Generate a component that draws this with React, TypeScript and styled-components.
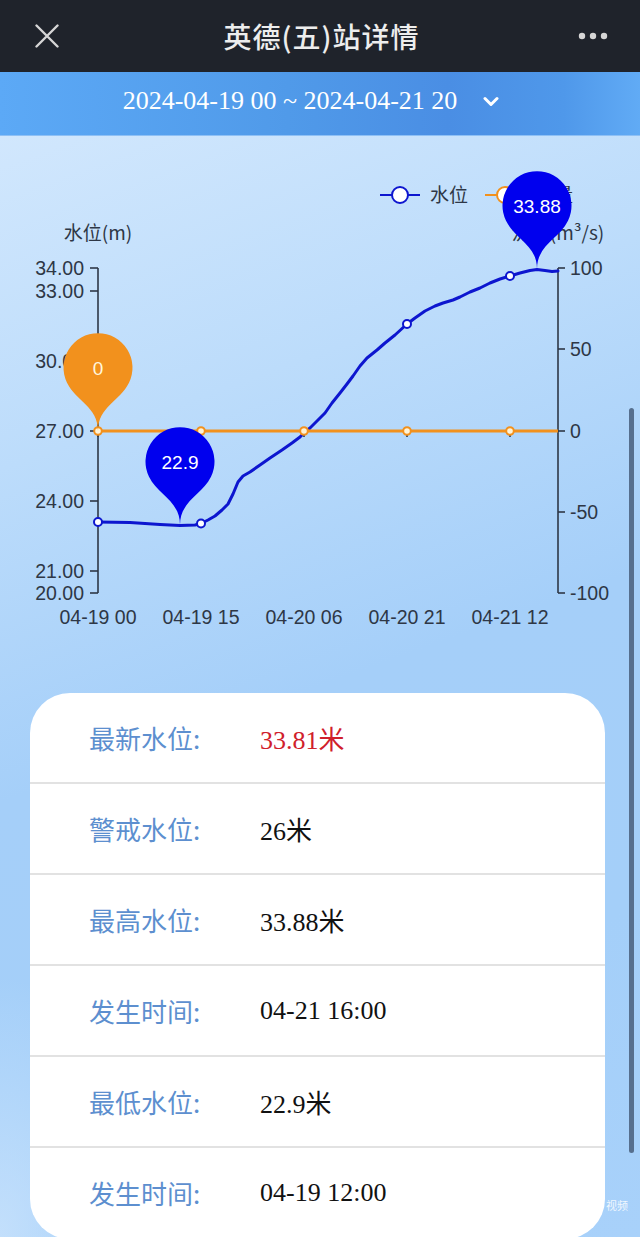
import React from "react";
import styled, { createGlobalStyle } from "styled-components";

const BLUE_LINE = "#0d16cf";
const BLUE_PIN = "#0000ee";
const ORANGE = "#f2911d";
const AXIS = "#2e3746";

const rows = [
  { label: "最新水位:", value: "33.81米", alert: true },
  { label: "警戒水位:", value: "26米" },
  { label: "最高水位:", value: "33.88米" },
  { label: "发生时间:", value: "04-21 16:00" },
  { label: "最低水位:", value: "22.9米" },
  { label: "发生时间:", value: "04-19 12:00" },
];

const leftTicks = [
  { y: 268, text: "34.00" },
  { y: 291, text: "33.00" },
  { y: 361, text: "30.00" },
  { y: 431, text: "27.00" },
  { y: 501, text: "24.00" },
  { y: 571, text: "21.00" },
  { y: 593, text: "20.00" },
];

const rightTicks = [
  { y: 268, text: "100" },
  { y: 349, text: "50" },
  { y: 431, text: "0" },
  { y: 512, text: "-50" },
  { y: 593, text: "-100" },
];

const xLabels = [
  { x: 98, text: "04-19 00" },
  { x: 201, text: "04-19 15" },
  { x: 304, text: "04-20 06" },
  { x: 407, text: "04-20 21" },
  { x: 510, text: "04-21 12" },
];

const levelLine: [number, number][] = [
  [98, 522], [130, 522.5], [160, 524.5], [180, 525.5], [195, 525], [201, 523.5],
  [208, 520], [215, 516], [222, 510], [228, 504], [233, 494], [238, 482],
  [243, 476], [250, 472], [260, 465], [270, 458], [282, 450], [292, 443],
  [300, 437], [304, 433], [310, 428], [318, 420], [325, 413], [332, 403],
  [340, 393], [347, 384], [353, 376], [360, 366], [367, 358], [377, 350],
  [385, 343], [395, 335], [407, 324], [415, 318], [425, 311], [435, 306],
  [443, 303], [453, 300], [460, 297], [470, 292], [480, 288], [490, 283],
  [500, 279], [510, 276], [520, 273], [530, 270.5], [537, 269.5],
  [545, 270.5], [552, 271.5], [558, 271],
];

const levelDots: [number, number][] = [
  [98, 522], [201, 523.5], [407, 324], [510, 276],
];

const pins = [
  { x: 98, y: 431, text: "0", color: ORANGE, textColor: "#fff6dd" },
  { x: 180, y: 525, text: "22.9", color: BLUE_PIN, textColor: "#ffffff" },
  { x: 537, y: 269, text: "33.88", color: BLUE_PIN, textColor: "#ffffff" },
];

// echarts-style "pin" balloon with its tip at (px, py)
const pinShape = (px: number, py: number, r = 34.5, h = 113) => {
  const u = h - r;
  const dy = (r * r) / u;
  const cy = py - u + dy;
  const a = Math.asin(dy / r);
  const dx = Math.cos(a) * r;
  const tx = Math.sin(a);
  const ty = Math.cos(a);
  const c1 = r * 0.6;
  const c2 = r * 0.7;
  const d = [
    `M ${px - dx} ${cy + dy}`,
    `A ${r} ${r} 0 1 1 ${px + dx} ${cy + dy}`,
    `C ${px + dx - tx * c1} ${cy + dy + ty * c1} ${px} ${py - c2} ${px} ${py}`,
    `C ${px} ${py - c2} ${px - dx + tx * c1} ${cy + dy + ty * c1} ${px - dx} ${cy + dy}`,
    "Z",
  ].join(" ");
  return { d, cy };
};

const LevelChart = () => (
  <ChartSvg width={640} height={557} viewBox="0 136 640 557">
    {/* legend */}
    <line x1={380} y1={195} x2={420} y2={195} stroke={BLUE_LINE} strokeWidth={2} />
    <circle cx={400} cy={195} r={8} fill="#fff" stroke={BLUE_LINE} strokeWidth={2} />
    <AxisText x={430} y={202}>水位</AxisText>
    <line x1={485} y1={195} x2={525} y2={195} stroke={ORANGE} strokeWidth={2} />
    <circle cx={505} cy={195} r={8} fill="#fff" stroke={ORANGE} strokeWidth={2} />
    <AxisText x={535} y={202}>流量</AxisText>

    {/* axis names */}
    <AxisText x={98} y={240} textAnchor="middle">水位(m)</AxisText>
    <AxisText x={558} y={240} textAnchor="middle">流量(m³/s)</AxisText>

    {/* left axis */}
    <line x1={98} y1={268} x2={98} y2={593} stroke={AXIS} strokeWidth={1.6} />
    {leftTicks.map((t) => (
      <g key={t.text}>
        <line x1={90} y1={t.y} x2={98} y2={t.y} stroke={AXIS} strokeWidth={1.6} />
        <NumText x={84} y={t.y + 7} textAnchor="end">{t.text}</NumText>
      </g>
    ))}

    {/* right axis */}
    <line x1={558} y1={268} x2={558} y2={593} stroke={AXIS} strokeWidth={1.6} />
    {rightTicks.map((t) => (
      <g key={t.text}>
        <line x1={558} y1={t.y} x2={565} y2={t.y} stroke={AXIS} strokeWidth={1.6} />
        <NumText x={570} y={t.y + 7}>{t.text}</NumText>
      </g>
    ))}

    {/* x axis ticks + labels */}
    {xLabels.map((l) => (
      <g key={l.text}>
        <line x1={l.x} y1={431} x2={l.x} y2={437} stroke={AXIS} strokeWidth={1.6} />
        <NumText x={l.x} y={624} textAnchor="middle">{l.text}</NumText>
      </g>
    ))}

    {/* water level */}
    <polyline
      points={levelLine.map((p) => p.join(",")).join(" ")}
      fill="none"
      stroke={BLUE_LINE}
      strokeWidth={3}
      strokeLinejoin="round"
      strokeLinecap="round"
    />
    {levelDots.map(([x, y]) => (
      <circle key={x} cx={x} cy={y} r={4} fill="#fff" stroke={BLUE_LINE} strokeWidth={2} />
    ))}

    {/* flow */}
    <line x1={98} y1={431} x2={558} y2={431} stroke={ORANGE} strokeWidth={3} />
    {xLabels.map((l) => (
      <circle key={l.x} cx={l.x} cy={431} r={3.8} fill="#fff4d8" stroke={ORANGE} strokeWidth={2} />
    ))}

    {/* mark points */}
    {pins.map((p) => {
      const { d, cy } = pinShape(p.x, p.y);
      return (
        <g key={p.text}>
          <path d={d} fill={p.color} />
          <PinText x={p.x} y={cy + 7} textAnchor="middle" fill={p.textColor}>
            {p.text}
          </PinText>
        </g>
      );
    })}
  </ChartSvg>
);

export default function App() {
  return (
    <>
      <GlobalStyle />
      <Page>
        <NavBar>
          <NavSide>
            <svg width={24} height={24} viewBox="0 0 24 24">
              <path d="M1.5 1.5 L22.5 22.5 M22.5 1.5 L1.5 22.5" stroke="#d6d6d6" strokeWidth={2.4} strokeLinecap="round" />
            </svg>
          </NavSide>
          <Title>英德(五)站详情</Title>
          <NavSide $right>
            <svg width={30} height={8} viewBox="0 0 30 8">
              <circle cx={4} cy={4} r={3.2} fill="#d6d6d6" />
              <circle cx={15} cy={4} r={3.2} fill="#d6d6d6" />
              <circle cx={26} cy={4} r={3.2} fill="#d6d6d6" />
            </svg>
          </NavSide>
        </NavBar>

        <DateBar>
          <DateRange>2024-04-19 00 ~ 2024-04-21 20</DateRange>
          <svg width={16} height={11} viewBox="0 0 16 11">
            <polyline points="2,2.5 8,8.5 14,2.5" fill="none" stroke="#fff" strokeWidth={3} strokeLinecap="round" strokeLinejoin="round" />
          </svg>
        </DateBar>

        <Content>
          <LevelChart />
          <InfoCard>
            {rows.map((r, i) => (
              <InfoRow key={i}>
                <Label>{r.label}</Label>
                <Value $alert={r.alert}>{r.value}</Value>
              </InfoRow>
            ))}
          </InfoCard>
        </Content>

        <Watermark>视频</Watermark>
        <ScrollThumb />
      </Page>
    </>
  );
}

const GlobalStyle = createGlobalStyle`
  html, body {
    margin: 0;
    padding: 0;
  }
  body {
    background: #a6d0fa;
    font-family: "Noto Sans CJK SC", "Noto Sans", sans-serif;
  }
`;

const Page = styled.div`
  position: relative;
  display: flex;
  flex-direction: column;
  width: 640px;
  height: 1237px;
  overflow: hidden;
`;

const NavBar = styled.header`
  flex-shrink: 0;
  display: grid;
  grid-template-columns: 1fr auto 1fr;
  align-items: center;
  height: 72px;
  padding: 0 32px 0 35px;
  background: #1f232b;
  box-sizing: border-box;
`;

const NavSide = styled.div<{ $right?: boolean }>`
  display: flex;
  justify-content: ${({ $right }) => ($right ? "flex-end" : "flex-start")};
  align-items: center;
`;

const Title = styled.h1`
  margin: 0;
  font-family: "Noto Sans CJK SC", sans-serif;
  font-size: 28px;
  font-weight: 500;
  letter-spacing: 1px;
  color: #ededed;
`;

const DateBar = styled.div`
  flex-shrink: 0;
  display: flex;
  align-items: center;
  justify-content: center;
  gap: 26px;
  height: 64px;
  padding: 0 18px 5px 0;
  background: linear-gradient(90deg, #5ca9f6 0%, #509ae9 45%, #4a8ee4 70%, #4f98ea 88%, #61abf5 100%);
  border-bottom: 1px solid #8ec0f5;
  box-sizing: border-box;
`;

const DateRange = styled.span`
  font-family: "Liberation Serif", serif;
  font-size: 26px;
  color: #ffffff;
`;

const Content = styled.main`
  flex: 1;
  min-height: 0;
  overflow: hidden;
  display: flex;
  flex-direction: column;
  background:
    radial-gradient(ellipse 140px 260px at 0% 100%, rgba(200, 226, 252, 0.85), rgba(200, 226, 252, 0) 100%),
    linear-gradient(160deg, #d1e7fd 0%, #bcdcfb 25%, #a5cff9 50%, #a4cff9 75%, #a8d1fa 100%);
`;

const ChartSvg = styled.svg`
  display: block;
  flex-shrink: 0;
`;

const AxisText = styled.text`
  font-family: "Noto Sans CJK SC", "Liberation Sans", sans-serif;
  font-size: 19px;
  fill: ${AXIS};
`;

const NumText = styled.text`
  font-family: "Liberation Sans", Arial, sans-serif;
  font-size: 19.5px;
  fill: ${AXIS};
`;

const PinText = styled.text`
  font-family: "Liberation Sans", Arial, sans-serif;
  font-size: 19px;
`;

const InfoCard = styled.section`
  flex-shrink: 0;
  width: 575px;
  margin-left: 30px;
  background: #ffffff;
  border-radius: 40px;
  overflow: hidden;
`;

const InfoRow = styled.div`
  display: grid;
  grid-template-columns: 171px 1fr;
  align-items: center;
  height: 89px;
  padding-left: 59px;
  border-bottom: 2px solid #e2e2e2;

  &:last-child {
    border-bottom-color: transparent;
  }
`;

const Label = styled.span`
  font-family: "Noto Sans CJK SC", sans-serif;
  font-size: 26px;
  font-weight: 400;
  color: #5d8fcf;
`;

const Value = styled.span<{ $alert?: boolean }>`
  font-family: "Liberation Serif", "Noto Sans CJK SC", serif;
  font-size: 26px;
  color: ${({ $alert }) => ($alert ? "#d0202b" : "#111111")};
`;

const Watermark = styled.span`
  position: absolute;
  left: 606px;
  top: 1197px;
  font-size: 11px;
  color: rgba(255, 255, 255, 0.85);
`;

const ScrollThumb = styled.div`
  position: absolute;
  left: 629px;
  top: 408px;
  width: 5px;
  height: 745px;
  border-radius: 3px;
  background: #566f8e;
`;
